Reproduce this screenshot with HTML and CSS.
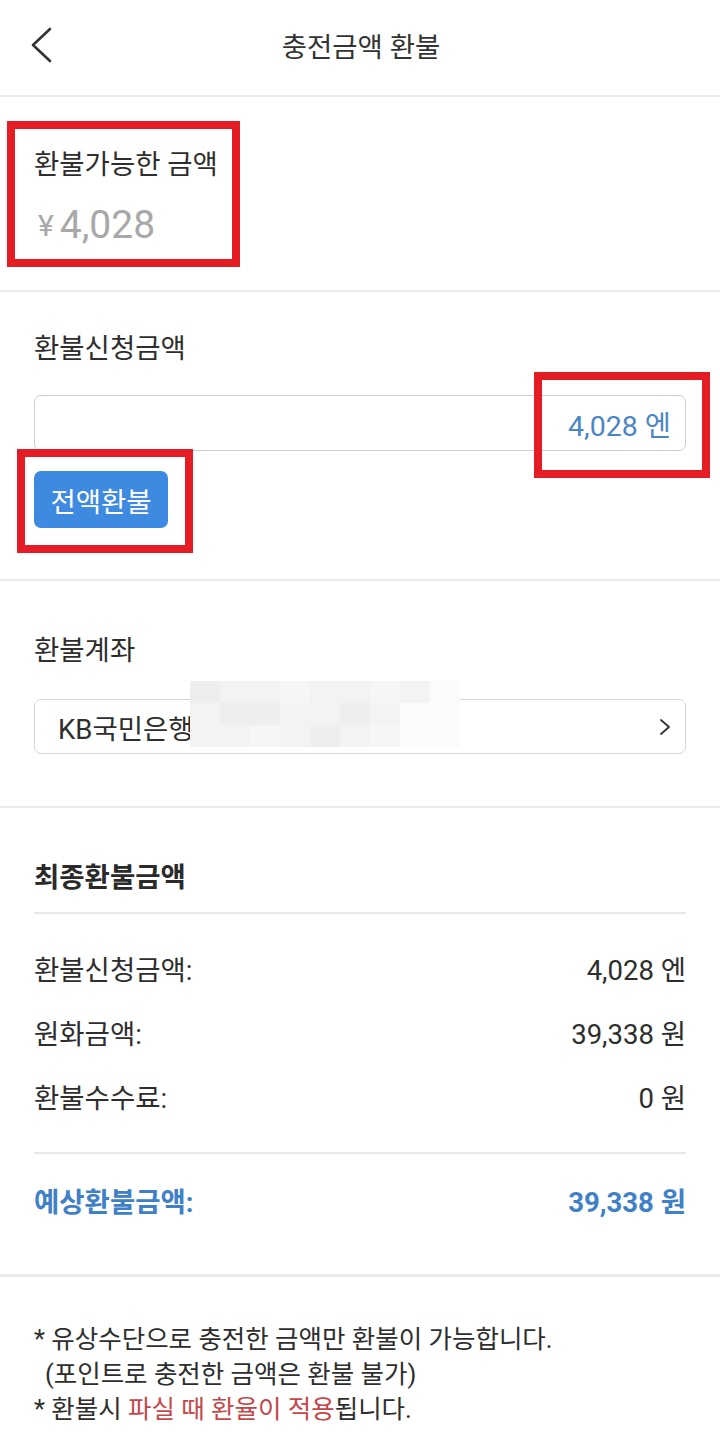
FILE: index.html
```html
<!DOCTYPE html>
<html lang="ko">
<head>
<meta charset="utf-8">
<title>충전금액 환불</title>
<link rel="stylesheet" href="styles.css">
</head>
<body>
<div class="page">
  <header class="topbar">
    <div class="back">
      <svg width="24" height="36" viewBox="0 0 24 36"><polyline points="20,2 3,18 20,34" fill="none" stroke="#333" stroke-width="2.6" stroke-linecap="round" stroke-linejoin="round"/></svg>
    </div>
    <h1 class="title">충전금액 환불</h1>
    <div class="back-spacer"></div>
  </header>

  <section class="sec avail">
    <div class="label">환불가능한 금액</div>
    <div class="amount"><span class="yen">¥</span>4,028</div>
    <div class="mark mark-avail"></div>
  </section>

  <section class="sec request">
    <div class="label">환불신청금액</div>
    <div class="input-box"><span class="input-val">4,028 엔</span></div>
    <button class="btn-all">전액환불</button>
    <div class="mark mark-input"></div>
    <div class="mark mark-btn"></div>
  </section>

  <section class="sec account">
    <div class="label">환불계좌</div>
    <div class="account-box">
      <span class="bank">KB국민은행</span>
      <svg class="chev" width="12" height="20" viewBox="0 0 12 20"><polyline points="2,3 10,10 2,17" fill="none" stroke="#333" stroke-width="1.8" stroke-linecap="round" stroke-linejoin="round"/></svg>
    </div>
    <div class="blur">
      <i class="p2"></i><i class="p1"></i><i class="p1"></i><i class="p3"></i><i class="p1"></i><i class="p1"></i><i class="p3"></i><i class="p1"></i><i class="p4"></i>
      <i class="p1"></i><i class="p2"></i><i class="p2"></i><i class="p1"></i><i class="p1"></i><i class="p2"></i><i class="p1"></i><i class="p4"></i><i class="p4"></i>
      <i class="p1"></i><i class="p1"></i><i class="p3"></i><i class="p1"></i><i class="p2"></i><i class="p1"></i><i class="p3"></i><i class="p4"></i><i class="p4"></i>
    </div>
  </section>

  <section class="sec final">
    <div class="final-title">최종환불금액</div>
    <div class="divider first"></div>
    <div class="row"><span>환불신청금액:</span><span>4,028 엔</span></div>
    <div class="row"><span>원화금액:</span><span>39,338 원</span></div>
    <div class="row"><span>환불수수료:</span><span>0 원</span></div>
    <div class="divider second"></div>
    <div class="row total"><span>예상환불금액:</span><span>39,338 원</span></div>
  </section>

  <footer class="notes">
    <p>* 유상수단으로 충전한 금액만 환불이 가능합니다.</p>
    <p class="indent">(포인트로 충전한 금액은 환불 불가)</p>
    <p>* 환불시 <span class="red">파실 때 환율이 적용</span>됩니다.</p>
  </footer>
</div>
</body>
</html>
```

FILE: styles.css
```css
* { box-sizing: border-box; }
html, body { margin: 0; padding: 0; background: #fff; }
body {
  font-family: Roboto, "Noto Sans CJK KR", sans-serif;
  color: #333;
  width: 720px;
}
.page { width: 720px; }

.topbar {
  height: 97px;
  border-bottom: 2px solid #ebebeb;
  display: flex;
  align-items: center;
  padding-bottom: 6px;
}
.back { width: 100px; padding-left: 30px; display: flex; align-items: center; }
.back-spacer { width: 100px; }
.title {
  flex: 1;
  margin: 0;
  text-align: center;
  font-size: 27.5px;
  font-weight: 400;
  color: #333;
  padding-left: 2px;
}

.sec {
  position: relative;
  padding: 0 34px;
  border-bottom: 2px solid #ebebeb;
}
.label { font-size: 27.5px; line-height: 36px; color: #2e2e2e; }

.avail { padding-top: 50px; padding-bottom: 42px; }
.amount {
  margin-top: 20px;
  font-size: 39px;
  line-height: 44px;
  color: #a8a8a8;
  padding-left: 4px;
}
.yen { font-size: 30px; margin-right: 6px; vertical-align: 2px; }

.mark { position: absolute; border: 8px solid #e41c24; }
.mark-avail { left: 7px; top: 24px; width: 233px; height: 146px; }
.mark-input { left: 534px; top: 80px; width: 176px; height: 106px; }
.mark-btn { left: 17px; top: 157px; width: 176px; height: 104px; }

.request { padding-top: 39px; padding-bottom: 51px; }
.input-box {
  margin-top: 28px;
  height: 56px;
  border: 1.5px solid #cfcfcf;
  border-radius: 7px;
  display: flex;
  align-items: center;
  justify-content: flex-end;
  padding-right: 14px;
}
.input-val { font-size: 28.5px; color: #4a86c6; }
.btn-all {
  display: block;
  margin-top: 20px;
  width: 134px;
  height: 57px;
  border: none;
  border-radius: 7px;
  background: #3e8ae0;
  color: #fff;
  font-family: Roboto, "Noto Sans CJK KR", sans-serif;
  font-size: 27.5px;
  padding: 0;
}

.account { padding-top: 52px; padding-bottom: 52px; }
.account-box {
  margin-top: 30px;
  height: 55px;
  border: 1.5px solid #d6d6d6;
  border-radius: 7px;
  display: flex;
  align-items: center;
  justify-content: space-between;
  padding: 0 14px 0 23px;
}
.bank { font-size: 27.5px; color: #2e2e2e; }
.blur {
  position: absolute;
  left: 190px;
  top: 100px;
  width: 270px;
  height: 66px;
  display: grid;
  grid-template-columns: repeat(9, 1fr);
  grid-template-rows: repeat(3, 1fr);
}
.blur i { display: block; }
.p1 { background: #f3f3f3; }
.p2 { background: #eeeeee; }
.p3 { background: #f6f6f6; }
.p4 { background: #fbfbfb; }

.final { padding-top: 52px; padding-bottom: 42px; border-bottom-width: 3px; }
.final-title { font-size: 27.5px; line-height: 36px; font-weight: 700; color: #2a2a2a; }
.divider { height: 2px; background: #e8e8e8; }
.divider.first { margin-top: 16px; margin-bottom: 22px; }
.divider.second { margin-top: 24px; margin-bottom: 14px; }
.row {
  height: 64px;
  display: flex;
  align-items: center;
  justify-content: space-between;
  font-size: 27.5px;
  color: #2e2e2e;
}
.row.total { color: #3f80c6; font-weight: 700; }

.notes { padding: 45px 34px 20px; }
.notes p { margin: 0; font-size: 25.5px; line-height: 35px; color: #2e2e2e; }
.notes .indent { padding-left: 11px; }
.red { color: #c4474b; }
```
